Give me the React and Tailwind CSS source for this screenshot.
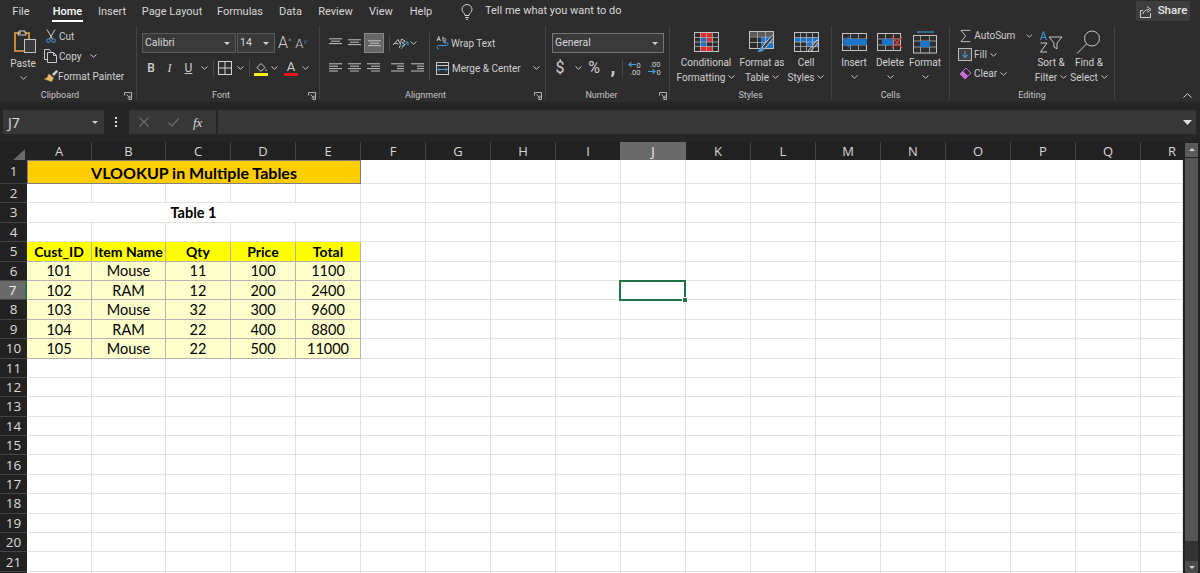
import React from 'react';

const COLS = ['A', 'B', 'C', 'D', 'E', 'F', 'G', 'H', 'I', 'J', 'K', 'L', 'M', 'N', 'O', 'P', 'Q', 'R'];
const ROW_NUMS = Array.from({ length: 22 }, (_, i) => i + 1);
const TABS = [
  ['File', 'w-[42px]'],
  ['Home', 'w-[51px]'],
  ['Insert', 'w-[38px]'],
  ['Page Layout', 'w-[82px]'],
  ['Formulas', 'w-[54px]'],
  ['Data', 'w-[47px]'],
  ['Review', 'w-[43px]'],
  ['View', 'w-[48px]'],
  ['Help', 'w-[32px]'],
];
const TABLE = [
  ['101', 'Mouse', '11', '100', '1100'],
  ['102', 'RAM', '12', '200', '2400'],
  ['103', 'Mouse', '32', '300', '9600'],
  ['104', 'RAM', '22', '400', '8800'],
  ['105', 'Mouse', '22', '500', '11000'],
];

const Chev = ({ className = '' }) => (
  <svg width="7" height="4" viewBox="0 0 7 4" className={className} fill="none" stroke="#c8c8c8" strokeWidth="1">
    <path d="M.5.5 3.5 3.2 6.5.5" />
  </svg>
);

const Launcher = () => (
  <svg width="8" height="8" viewBox="0 0 8 8" fill="none" stroke="#b4b4b4" strokeWidth="1">
    <path d="M.5 3.5v-3h7v7h-3M2.5 2.5 6 6M6 3.5V6H3.5" />
  </svg>
);

const Sep = () => <div className="w-px h-[73px] bg-[#434343] shrink-0" />;
const MiniSep = () => <div className="w-px h-[17px] bg-[#484848] shrink-0" />;

const Group = ({ width, label, launcher, launcherSlot, children }) => (
  <div className={`${width} h-[76px] flex flex-col shrink-0`}>
    <div className="h-[63px] flex">{children}</div>
    <div className="h-[13px] flex items-center text-[9px] text-[#c4c4c4]">
      <div className="flex-1 text-center leading-none">{label}</div>
      {launcher && <div className={`${launcherSlot} flex justify-center`}><Launcher /></div>}
    </div>
  </div>
);

const Lines = ({ rows }) => (
  <svg width="13" height="11" viewBox="0 0 13 11" stroke="#c4c4c4" strokeWidth="1">
    {rows.map((r, i) => <line key={i} x1={r[0]} x2={r[1]} y1={i * 2.4 + 0.8} y2={i * 2.4 + 0.8} />)}
  </svg>
);

const PasteIcon = () => (
  <svg width="24" height="24" viewBox="0 0 24 24" fill="none">
    <path d="M8 3H2v18h9" stroke="#e8a33d" strokeWidth="1.6" />
    <path d="M12 3h4v6" stroke="#e8a33d" strokeWidth="1.6" />
    <path d="M6 3V1h6v2h1v2H5V3z" stroke="#cfcfcf" strokeWidth="1" />
    <rect x="11.5" y="9.5" width="11" height="13" fill="#3a3a3a" stroke="#c4c4c4" />
  </svg>
);

const CutIcon = () => (
  <svg width="10" height="14" viewBox="0 0 10 14" fill="none" stroke="#cfcfcf" strokeWidth="1">
    <path d="M1 .5 6.5 10M9 .5 3.5 10" />
    <circle cx="2.4" cy="11.6" r="1.8" stroke="#5a9bd8" />
    <circle cx="7.6" cy="11.6" r="1.8" stroke="#5a9bd8" />
  </svg>
);

const CopyIcon = () => (
  <svg width="14" height="14" viewBox="0 0 14 14" fill="none" stroke="#c8c8c8" strokeWidth="1">
    <path d="M3.5 10.5h-3v-10h5l1 2" />
    <path d="M3.5 3.5h6l3 3v7h-9z" />
    <path d="M9.5 3.5v3h3" />
  </svg>
);

const BrushIcon = () => (
  <svg width="16" height="14" viewBox="0 0 16 14" fill="none">
    <path d="M9 5 13.5 1l1.5 1.5L11 7z" fill="#cfcfcf" />
    <path d="M6 5l4.5 4-2 3.5-7-2.5 2.5-1 2-4z" fill="#e6bd6a" stroke="#d0a64f" strokeWidth=".6" />
  </svg>
);

const BorderIcon = () => (
  <svg width="14" height="14" viewBox="0 0 14 14" fill="none" stroke="#d4d4d4" strokeWidth="1">
    <rect x=".5" y=".5" width="13" height="13" />
    <path d="M7 .5v13M.5 7h13" />
  </svg>
);

const FillIcon = () => (
  <svg width="14" height="15" viewBox="0 0 14 15" fill="none">
    <path d="M3 6.5 7 2.5l4 4-3.5 3.5h-1z" stroke="#d0d0d0" />
    <path d="M12 8c.8 1 1 1.6.5 2s-1.2 0-1-.7z" fill="#d0d0d0" />
    <rect x="0" y="12" width="14" height="3" fill="#f5ee16" />
  </svg>
);

const OrientIcon = () => (
  <svg width="17" height="15" viewBox="0 0 17 15" fill="none">
    <path d="M1 9 6 3.5l2 4M3 7l3.5 1" stroke="#c8c8c8" />
    <path d="M7.5 12 9.5 3 13 5l-3 2 3 1.5-3.5 2" stroke="#c8c8c8" strokeWidth=".9" />
    <path d="M9 13 15.5 6.5M12.5 6H16v3.5" stroke="#4a9ad8" />
  </svg>
);

const WrapIcon = () => (
  <svg width="13" height="14" viewBox="0 0 13 14" fill="none">
    <path d="M3 13C.5 13 .5 9.5 3 9.5h7c2.6 0 2.6-3 0-3H8.5" stroke="#4a9ad8" strokeWidth="1" />
    <path d="M9.5 5 8 6.500 9.5 8" stroke="#4a9ad8" />
    <path d="M1 5l1.700-4.500L4.400 5M1.600 3.600h2.200M7 .5v4.400M7 2.800c1-1 2.600-.5 2.600.9S8 5.900 7 4.900" stroke="#cfcfcf" strokeWidth=".9" />
  </svg>
);

const MergeIcon = () => (
  <svg width="13" height="13" viewBox="0 0 13 13" fill="none">
    <rect x=".5" y=".5" width="12" height="12" stroke="#c8c8c8" />
    <path d="M.5 3.500h12" stroke="#c8c8c8" />
    <path d="M2 7.500h9M3.500 5.800 2 7.500l1.500 1.700M9.500 5.800 11 7.500 9.500 9.200" stroke="#4a9ad8" />
  </svg>
);

const Decimals = ({ flip }) => (
  <svg width="14" height="15" viewBox="0 0 14 15" fill="none">
    <path d={flip ? 'M1 10.5h7M5.5 8.300 8 10.5l-2.500 2.200' : 'M8 3.500H1M3.500 1.300 1 3.500l2.500 2.200'} stroke="#4a9ad8" strokeWidth="1.200" />
    <text x={flip ? 3 : 8.5} y={flip ? 6 : 7} fontSize="7.5" fill="#cfcfcf" fontFamily="Roboto">{flip ? '.00' : '0'}</text>
    <text x={flip ? 9.5 : 2} y="14" fontSize="7.5" fill="#cfcfcf" fontFamily="Roboto">{flip ? '0' : '.00'}</text>
  </svg>
);

const StyleGrid = ({ children, size = 'w-[25px] h-[20px]' }) => (
  <svg viewBox="0 0 25 20" className={size} fill="none">
    {children}
    <rect x=".5" y=".5" width="24" height="19" stroke="#c4c4c4" />
    <path d="M.5 5.500h24M.5 10h24M.5 14.500h24M6.500.5v19M12.500.5v19M18.500.5v19" stroke="#b0b0b0" strokeWidth=".8" />
  </svg>
);

const CondIcon = () => (
  <StyleGrid>
    <rect x="6" y="0" width="12" height="5.5" fill="#e02b2b" />
    <rect x="6" y="5.5" width="6.5" height="4.5" fill="#1a6fc4" />
    <rect x="12.5" y="5.5" width="6" height="4.5" fill="#e02b2b" />
    <rect x="6" y="10" width="6.5" height="4.5" fill="#1a6fc4" />
    <rect x="6" y="14.5" width="12" height="5" fill="#e02b2b" />
  </StyleGrid>
);

const TableIcon = () => (
  <svg viewBox="0 0 26 22" className="w-[26px] h-[22px]" fill="none">
    <rect x=".5" y=".5" width="24" height="5" fill="#5c5c5c" />
    <rect x="12" y="6" width="12.5" height="11" fill="#1f74cc" />
    <rect x=".5" y=".5" width="24" height="17" stroke="#c4c4c4" />
    <path d="M.5 6h24M.5 11.500h24M8.500.5v17M16.500.5v17" stroke="#b0b0b0" strokeWidth=".8" />
    <path d="M13 16 23 4.500l2 1.500L15.500 18z" fill="#3a3a3a" stroke="#d0d0d0" />
    <path d="M12.500 16c-2 .5-1.500 3-4.500 4.500 3 1 6.500 0 7-2.500z" fill="#4a9ad8" />
  </svg>
);

const CellStylesIcon = () => (
  <StyleGrid>
    <rect x="0" y="5.5" width="25" height="4.5" fill="#1f74cc" />
    <rect x="12.5" y="10" width="12" height="4.5" fill="#1f74cc" />
    <path d="M14 19 23 8l2 1.500L16 20z" fill="#3a3a3a" stroke="#d0d0d0" />
  </StyleGrid>
);

const InsertIcon = () => (
  <svg viewBox="0 0 27 19" className="w-[27px] h-[19px]" fill="none">
    <rect x="1.5" y=".5" width="24" height="17" stroke="#c4c4c4" />
    <path d="M1.500 6h24M1.500 12h24M9.500.5v17M17.500.5v17" stroke="#b0b0b0" strokeWidth=".8" />
    <rect x="9" y="6" width="17" height="6" fill="#1f74cc" />
    <path d="M8 3 1 9l7 6v-3h3V6H8z" fill="#1f74cc" />
  </svg>
);

const DeleteIcon = () => (
  <svg viewBox="0 0 26 19" className="w-[26px] h-[19px]" fill="none">
    <rect x=".5" y=".5" width="23" height="17" stroke="#c4c4c4" />
    <path d="M.5 6h23M.5 12h23M8.500.5v17M16.500.5v17" stroke="#b0b0b0" strokeWidth=".8" />
    <rect x="5" y="6" width="11" height="6" fill="#1f74cc" />
    <path d="M15 4l10 11M25 4 15 15" stroke="#e23b3b" strokeWidth="1.400" />
  </svg>
);

const FormatIcon = () => (
  <svg viewBox="0 0 25 23" className="w-[25px] h-[23px]" fill="none">
    <path d="M5 1h15M5 0v2M20 0v2" stroke="#4a9ad8" />
    <rect x=".5" y="4.5" width="23" height="17.5" stroke="#c4c4c4" />
    <path d="M.5 10h23M.5 16h23M7.500 4.500v17.500M16.500 4.500v17.500" stroke="#b0b0b0" strokeWidth=".8" />
    <rect x="7" y="10" width="10" height="6" fill="#1f74cc" />
  </svg>
);

const SigmaIcon = () => (
  <svg width="12" height="14" viewBox="0 0 12 14" fill="none" stroke="#c8c8c8" strokeWidth="1">
    <path d="M11 1H1l5 6-5 6h10" />
  </svg>
);

const FillDown = () => (
  <svg width="14" height="13" viewBox="0 0 14 13" fill="none">
    <rect x=".5" y=".5" width="13" height="12" fill="#404040" stroke="#bdbdbd" />
    <path d="M7 3v6M4.500 6.800 7 9.500l2.500-2.700" stroke="#4a9ad8" strokeWidth="1.100" />
  </svg>
);

const Eraser = () => (
  <svg width="14" height="13" viewBox="0 0 14 13" fill="none">
    <path d="M8 1l5 5-6 6-5-5z" stroke="#c86dd7" strokeWidth="1" />
    <path d="M5 4l5 5-3 3-5-5z" fill="#c86dd7" />
  </svg>
);

const SortIcon = () => (
  <svg width="24" height="24" viewBox="0 0 24 24" fill="none">
    <path d="M1.500 10 4.500 1.500 7.500 10M2.500 7.500h4" stroke="#4a9ad8" strokeWidth="1" />
    <path d="M1.500 13h6.500L1.500 22H8" stroke="#c8c8c8" strokeWidth="1" />
    <path d="M10 7h13l-5 6v6l-3-2v-4z" stroke="#c8c8c8" strokeWidth="1" />
  </svg>
);

const FindIcon = () => (
  <svg width="26" height="26" viewBox="0 0 26 26" fill="none" stroke="#c8c8c8" strokeWidth="1">
    <circle cx="16" cy="9.5" r="7.5" />
    <path d="M10.500 15 1 24.500" />
  </svg>
);

const BulbIcon = () => (
  <svg width="12" height="16" viewBox="0 0 12 16" fill="none" stroke="#d4d4d4" strokeWidth="1">
    <path d="M4 11.500C4 9 1 8.500 1 5.500a5 5 0 0 1 10 0c0 3-3 3.500-3 6z" />
    <path d="M4.200 13.500h3.600M5 15.300h2" />
  </svg>
);

const ShareIcon = () => (
  <svg width="14" height="13" viewBox="0 0 14 13" fill="none" stroke="#cfcfcf" strokeWidth="1">
    <path d="M4 5.500H1.500v7h10V8" />
    <path d="M4 9c.5-3 3-4.500 6-4.500M8 1.500l4 3-4 3" />
  </svg>
);

const BigButton = ({ width, icon, line1, line2, lineChev }) => (
  <div className={`${width} flex flex-col items-center pt-[6px] shrink-0`}>
    <div className="h-[20px] flex items-center justify-center">{icon}</div>
    <div className="mt-[4px] h-[14px] leading-[14px] whitespace-nowrap">{line1}</div>
    <div className="h-[14px] flex items-center gap-[3px] whitespace-nowrap">
      {line2}
      {lineChev && <Chev />}
    </div>
  </div>
);

const ComboBox = ({ width, text, border = 'border-[#5a5a5a]' }) => (
  <div className={`${width} h-[20px] bg-[#3a3a3a] border ${border} flex items-center justify-between pl-[2px] pr-[5px] text-[10.5px] text-[#d8d8d8]`}>
    <span>{text}</span>
    <span className="w-0 h-0 border-x-[3px] border-x-transparent border-t-[3px] border-t-[#d0d0d0]" />
  </div>
);

const TopTabs = () => (
  <div className="h-[26px] flex items-center text-[11px] text-[#d8d8d8]">
    {TABS.map(([name, width]) => (
      <div key={name} className={`${width} shrink-0 h-full flex justify-center`}>
        {name === 'Home' ? (
          <div className="h-full flex flex-col items-center pt-[4px] text-white font-medium">
            <span className="leading-[15px]">{name}</span>
            <span className="mt-[1px] w-[31px] h-[2px] bg-white" />
          </div>
        ) : (
          <span className="leading-[23px]">{name}</span>
        )}
      </div>
    ))}
    <div className="ml-[24px] pb-[2px]"><BulbIcon /></div>
    <span className="ml-[12px] pb-[3px]">Tell me what you want to do</span>
    <div className="ml-auto mr-[10px] mb-[4px] w-[54px] h-[20px] bg-[#3e3e3e] rounded-[2px] flex items-center justify-center gap-[5px] font-medium text-[11.5px] text-[#e6e6e6]">
      <ShareIcon />
      Share
    </div>
  </div>
);

const Ribbon = () => (
  <div className="h-[76px] flex text-[10px] text-[#d0d0d0]">
    <Group width="w-[136px]" label="Clipboard" launcher launcherSlot="w-[16px]">
      <div className="w-[44px] flex flex-col items-center pt-[4px]">
        <div className="ml-[5px]"><PasteIcon /></div>
        <div className="mt-[3px] leading-[14px] ml-[2px]">Paste</div>
        <Chev className="mt-[5px] ml-[2px]" />
      </div>
      <div className="flex-1 flex flex-col">
        <div className="h-[20px] flex items-center"><div className="w-[15px] pl-[2px]"><CutIcon /></div>Cut</div>
        <div className="h-[20px] flex items-center"><div className="w-[15px]"><CopyIcon /></div>Copy<Chev className="ml-[8px]" /></div>
        <div className="h-[20px] flex items-center"><div className="w-[15px] -ml-px"><BrushIcon /></div>Format Painter</div>
      </div>
    </Group>
    <Sep />
    <Group width="w-[182px]" label="Font" launcher launcherSlot="w-[14px]">
      <div className="flex flex-col pt-[7px] pl-[5px]">
        <div className="flex items-center">
          <ComboBox width="w-[94px]" text="Calibri" />
          <ComboBox width="w-[38px] ml-px" text="14" />
          <span className="ml-[3px] text-[16px] leading-none font-light">A<sup className="text-[#bbb] text-[8px]">^</sup></span>
          <span className="ml-[4px] text-[13px] leading-none font-light">A<sup className="text-[#4a9ad8] text-[8px]">v</sup></span>
        </div>
        <div className="mt-[5px] h-[20px] flex items-center font-['Liberation_Serif',serif] text-[12px]">
          <span className="w-[18px] text-center font-medium font-['Roboto',sans-serif]">B</span>
          <span className="w-[19px] text-center italic">I</span>
          <span className="w-[19px] text-center underline font-['Roboto',sans-serif]">U</span>
          <div className="w-[12px] flex justify-center"><Chev /></div>
          <div className="ml-[3px]"><MiniSep /></div>
          <div className="ml-[4px]"><BorderIcon /></div>
          <div className="ml-[3px] w-[10px] flex justify-center"><Chev /></div>
          <div className="ml-[4px]"><MiniSep /></div>
          <div className="ml-[4px]"><FillIcon /></div>
          <div className="ml-[1px] w-[10px] flex justify-center"><Chev /></div>
          <div className="ml-[5px] w-[14px] flex flex-col items-center">
            <span className="font-['Roboto',sans-serif] text-[13px] leading-[12px]">A</span>
            <span className="w-[14px] h-[3px] bg-[#e8141c]" />
          </div>
          <div className="ml-[3px] w-[9px] flex justify-center"><Chev /></div>
        </div>
      </div>
    </Group>
    <Sep />
    <Group width="w-[225px]" label="Alignment" launcher launcherSlot="w-[14px]">
      <div className="w-[109px] flex flex-col pt-[7px] pl-[9px]">
        <div className="h-[20px] flex items-center">
          <Lines rows={[[0, 13], [2, 11], [0, 13]]} />
          <div className="ml-[6px] pt-[3px]"><Lines rows={[[0, 13], [2, 11], [0, 13]]} /></div>
          <div className="ml-[3px] w-[20px] h-[20px] bg-[#666] border border-[#888] flex items-end justify-center pb-[1px]"><Lines rows={[[0, 13], [2, 11], [0, 13]]} /></div>
          <div className="ml-[5px]"><MiniSep /></div>
          <div className="ml-[2px]"><OrientIcon /></div>
          <Chev className="ml-[1px]" />
        </div>
        <div className="mt-[5px] h-[20px] flex items-center">
          <Lines rows={[[0, 13], [0, 9], [0, 13], [0, 9]]} />
          <div className="ml-[6px]"><Lines rows={[[0, 13], [2, 11], [0, 13], [2, 11]]} /></div>
          <div className="ml-[6px]"><Lines rows={[[0, 13], [4, 13], [0, 13], [4, 13]]} /></div>
          <div className="ml-[11px]"><Lines rows={[[0, 13], [6, 13], [6, 13], [0, 13]]} /></div>
          <div className="ml-[7px]"><Lines rows={[[0, 13], [6, 13], [6, 13], [0, 13]]} /></div>
        </div>
      </div>
      <div className="mt-[7px]"><div className="w-px h-[47px] bg-[#484848]" /></div>
      <div className="flex flex-col pt-[7px] pl-[6px] whitespace-nowrap">
        <div className="h-[20px] flex items-center gap-[2px]"><WrapIcon />Wrap Text</div>
        <div className="mt-[5px] h-[20px] flex items-center gap-[3px]"><MergeIcon />Merge &amp; Center<Chev className="ml-[9px]" /></div>
      </div>
    </Group>
    <Sep />
    <Group width="w-[123px]" label="Number" launcher launcherSlot="w-[12px]">
      <div className="flex flex-col pt-[7px] pl-[6px]">
        <ComboBox width="w-[112px]" text="General" border="border-[#777]" />
        <div className="mt-[5px] h-[20px] flex items-center text-[#cfcfcf]">
          <span className="ml-[2px] w-[12px] text-center text-[16px] leading-none">$</span>
          <Chev className="ml-[9px]" />
          <span className="ml-[3px] w-[18px] text-center text-[16px] leading-none">%</span>
          <span className="ml-[6px] w-[8px] text-center text-[20px] font-bold leading-[14px] -mt-[4px]">,</span>
          <div className="ml-[5px]"><MiniSep /></div>
          <div className="ml-[5px]"><Decimals /></div>
          <div className="ml-[5px]"><Decimals flip /></div>
        </div>
      </div>
    </Group>
    <Sep />
    <Group width="w-[161px]" label="Styles">
      <div className="w-[6px]" />
      <BigButton width="w-[60px]" icon={<CondIcon />} line1="Conditional" line2="Formatting" lineChev />
      <BigButton width="w-[52px]" icon={<TableIcon />} line1="Format as" line2="Table" lineChev />
      <BigButton width="w-[36px]" icon={<CellStylesIcon />} line1="Cell" line2="Styles" lineChev />
    </Group>
    <Sep />
    <Group width="w-[117px]" label="Cells">
      <div className="w-[2px]" />
      <BigButton width="w-[40px]" icon={<InsertIcon />} line1="Insert" line2={<Chev />} />
      <BigButton width="w-[32px]" icon={<DeleteIcon />} line1="Delete" line2={<Chev />} />
      <BigButton width="w-[38px]" icon={<FormatIcon />} line1="Format" line2={<Chev />} />
    </Group>
    <Sep />
    <Group width="w-[164px]" label="Editing">
      <div className="w-[83px] flex flex-col">
        <div className="h-[19px] flex items-center pl-[10px] gap-[3px]"><SigmaIcon />AutoSum<Chev className="ml-[8px]" /></div>
        <div className="h-[19px] flex items-center pl-[8px] gap-[2px]"><FillDown />Fill<Chev className="ml-[1px]" /></div>
        <div className="h-[19px] flex items-center pl-[8px] gap-[2px]"><Eraser />Clear<Chev className="ml-[1px]" /></div>
      </div>
      <BigButton width="w-[36px]" icon={<SortIcon />} line1="Sort &" line2="Filter" lineChev />
      <BigButton width="w-[40px]" icon={<FindIcon />} line1="Find &" line2="Select" lineChev />
    </Group>
    <Sep />
    <div className="flex-1 flex items-end justify-end pr-[8px] pb-[4px]">
      <svg width="9" height="5" viewBox="0 0 9 5" fill="none" stroke="#d4d4d4"><path d="M.5 4.500 4.500.7l4 3.800" /></svg>
    </div>
  </div>
);

const FormulaBar = () => (
  <div className="h-[32px] bg-[#262626] flex pt-[8px] pl-[3px] pr-[4px]">
    <div className="w-[101px] h-[24px] bg-[#383838] flex items-center justify-between pl-[5px] pr-[6px] text-[14px] text-[#e0e0e0] font-['Open_Sans',sans-serif]">
      J7
      <span className="w-0 h-0 border-x-[3px] border-x-transparent border-t-[3px] border-t-[#d0d0d0]" />
    </div>
    <div className="w-[25px] h-[24px] flex flex-col items-center justify-center gap-[2px] pr-[1px]">
      <span className="w-[2px] h-[2px] bg-[#ddd]" />
      <span className="w-[2px] h-[2px] bg-[#ddd]" />
      <span className="w-[2px] h-[2px] bg-[#ddd]" />
    </div>
    <div className="w-[87px] h-[24px] bg-[#383838] flex items-center pl-[10px]">
      <svg width="10" height="10" viewBox="0 0 10 10" fill="none" stroke="#6c6c6c" strokeWidth="1.200"><path d="M.5.5l9 9M9.500.5l-9 9" /></svg>
      <svg className="ml-[19px]" width="11" height="9" viewBox="0 0 11 9" fill="none" stroke="#6c6c6c" strokeWidth="1.400"><path d="M.5 4.500 4 8l6.500-7.500" /></svg>
      <span className="ml-[14px] font-['Liberation_Serif',serif] italic text-[13px] text-[#dcdcdc] leading-none">fx</span>
    </div>
    <div className="ml-[2px] flex-1 h-[24px] bg-[#383838] flex items-center justify-end pr-[4px]">
      <svg width="9" height="5" viewBox="0 0 9 5" fill="#e0e0e0"><path d="M0 0h9L4.500 5z" /></svg>
    </div>
  </div>
);

const GRID_COLS = 'grid grid-cols-[27px_65px_74px_repeat(15,65px)_42px]';

const RowCells = ({ row }) => {
  const numClass = row === 7
    ? 'bg-[#6a6a6a] border-r-2 border-r-[#217346] text-[#f0f0f0]'
    : 'bg-[#222222] text-[#dcdcdc]';
  const rowHeight = row === 1 ? 'h-[24px]' : 'h-[19.4px]';
  const cells = [];
  // row 22 only peeks in as the last pixel line, so it gets no label
  cells.push(
    <div key="num" className={`${rowHeight} ${numClass} border-b border-b-[#444] flex items-center justify-center text-[13.5px] font-['Open_Sans',sans-serif]`}>{row < 22 ? row : ''}</div>
  );
  let start = 0;
  if (row === 1) {
    cells.push(
      <div key="title" className="col-span-5 h-[24px] pt-px bg-[#ffcc00] border border-[#7f7f7f] flex items-center justify-center text-[16px] font-bold text-black">
        VLOOKUP in Multiple Tables
      </div>
    );
    start = 5;
  } else if (row === 3) {
    cells.push(
      <div key="sub" className="col-span-5 h-[19.4px] pt-px bg-white border-b border-r border-[#e2e2e2] flex items-center justify-center text-[14.5px] font-bold text-black">
        Table 1
      </div>
    );
    start = 5;
  } else if (row === 5) {
    ['Cust_ID', 'Item Name', 'Qty', 'Price', 'Total'].forEach((t) => {
      cells.push(
        <div key={t} className="h-[19.4px] pt-px bg-[#ffff00] border-r border-b border-[#b4b4b4] flex items-center justify-center text-[14px] font-bold text-black whitespace-nowrap">{t}</div>
      );
    });
    start = 5;
  } else if (row >= 6 && row <= 10) {
    TABLE[row - 6].forEach((t, i) => {
      cells.push(
        <div key={i} className="h-[19.4px] pt-px bg-[#ffffcc] border-r border-b border-[#b4b4b4] flex items-center justify-center text-[14.5px] text-black">{t}</div>
      );
    });
    start = 5;
  }
  for (let i = start; i < COLS.length; i++) {
    const selected = row === 7 && COLS[i] === 'J';
    cells.push(
      <div key={COLS[i]} className={selected
        ? `${rowHeight} w-[65px] -ml-px relative z-10 bg-white outline-2 -outline-offset-1 outline-[#217346]`
        : `${rowHeight} bg-white border-r border-b border-[#e2e2e2]`}>
        {selected && <span className="absolute -right-[2px] -bottom-[2px] w-[4px] h-[4px] bg-[#217346] border border-white box-content -m-px" />}
      </div>
    );
  }
  return cells;
};

const Sheet = () => (
  <div className="flex bg-[#222222]">
    <div className="w-[1183px] font-['Lato',sans-serif]">
      <div className={`${GRID_COLS} h-[18px] text-[#d8d8d8] text-[13px] font-['Open_Sans',sans-serif]`}>
        <div className="flex items-end justify-end pr-[2px] pb-[2px]">
          <div className="w-0 h-0 border-l-[14px] border-l-transparent border-b-[13px] border-b-[#6b6b6b]" />
        </div>
        {COLS.map((c) => (
          <div key={c} className={c === 'J'
            ? '-ml-px bg-[#6a6a6a] border-b-2 border-b-[#217346] flex items-center justify-center text-[#f0f0f0]'
            : c === 'R'
              ? 'border-b-2 border-b-[#8a8a8a] flex items-center pl-[27px]'
              : 'border-r border-r-[#444] border-b-2 border-b-[#8a8a8a] flex items-center justify-center'}>
            {c}
          </div>
        ))}
      </div>
      <div className={GRID_COLS}>
        {ROW_NUMS.map((row) => <RowCells key={row} row={row} />)}
      </div>
    </div>
    <div className="ml-[2px] w-[13px] h-[431px] flex flex-col">
      <div className="h-[14px] mt-px bg-[#5c5c5c] flex items-center justify-center">
        <span className="w-0 h-0 border-x-[3px] border-x-transparent border-b-[3px] border-b-[#cfcfcf]" />
      </div>
      <div className="mt-px h-[384px] bg-[#555555]" />
      <div className="h-[20px] bg-[#333333]" />
      <div className="h-[12px] bg-[#4c4c4c] flex items-center justify-center">
        <span className="w-0 h-0 border-x-[3px] border-x-transparent border-t-[3px] border-t-[#cfcfcf]" />
      </div>
    </div>
  </div>
);

export default function App() {
  return (
    <div className="w-[1200px] h-[573px] overflow-hidden bg-[#2d2d2d] font-['Roboto',sans-serif]">
      <TopTabs />
      <Ribbon />
      <FormulaBar />
      <div className="h-[8px] bg-[#262626]" />
      <Sheet />
    </div>
  );
}
